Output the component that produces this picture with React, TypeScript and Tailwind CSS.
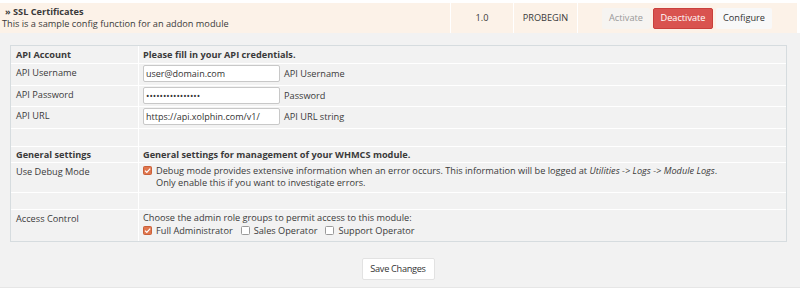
import React from 'react';

const Check = ({ on }: { on: boolean }) =>
  on ? (
    <svg className="inline-block w-[9px] h-[9px] mr-[4px] align-[-1px]" viewBox="0 0 9 9">
      <rect x="0.5" y="0.5" width="8" height="8" rx="1" fill="#e0764e" stroke="#c9603a" />
      <path d="M2 4.6 L3.8 6.4 L7.2 2.6" fill="none" stroke="#fff" strokeWidth="1.3" />
    </svg>
  ) : (
    <svg className="inline-block w-[9px] h-[9px] mr-[4px] align-[-1px]" viewBox="0 0 9 9">
      <rect x="0.5" y="0.5" width="8" height="8" rx="1" fill="#fff" stroke="#9a9a9a" />
    </svg>
  );

const Field = ({ value, hint }: { value: string; hint: string }) => (
  <div className="flex items-center">
    <div className="w-[137px] h-[17px] bg-white border border-[#c8c8c8] rounded-[2px] px-[2px] flex items-center text-[9px] text-[#333] overflow-hidden">
      {value}
    </div>
    <span className="ml-[4px]">{hint}</span>
  </div>
);

export default function App() {
  const rows: { label: string; h: string; bold?: boolean; content: React.ReactNode; top?: boolean }[] = [
    { label: 'API Account', h: 'h-[18px]', bold: true, content: <b>Please fill in your API credentials.</b> },
    { label: 'API Username', h: 'h-[22px]', top: true, content: <Field value="user@domain.com" hint="API Username" /> },
    { label: 'API Password', h: 'h-[21px]', top: true, content: <Field value="••••••••••••••••" hint="Password" /> },
    { label: 'API URL', h: 'h-[22px]', top: true, content: <Field value="https://api.xolphin.com/v1/" hint="API URL string" /> },
    { label: '', h: 'h-[18px]', content: null },
    { label: 'General settings', h: 'h-[16px]', bold: true, content: <b>General settings for management of your WHMCS module.</b> },
    {
      label: 'Use Debug Mode',
      h: 'h-[30px]',
      top: true,
      content: (
        <div className="leading-[12px] pt-[1px]">
          <div>
            <Check on />
            Debug mode provides extensive information when an error occurs. This information will be logged at{' '}
            <i>Utilities -&gt; Logs -&gt; Module Logs</i>.
          </div>
          <div className="pl-[13px]">Only enable this if you want to investigate errors.</div>
        </div>
      ),
    },
    { label: '', h: 'h-[17px]', content: null },
    {
      label: 'Access Control',
      h: 'h-[31px]',
      top: true,
      content: (
        <div className="leading-[13px]">
          <div>Choose the admin role groups to permit access to this module:</div>
          <div className="flex items-center">
            <span className="mr-[8px]"><Check on />Full Administrator</span>
            <span className="mr-[8px]"><Check on={false} />Sales Operator</span>
            <span><Check on={false} />Support Operator</span>
          </div>
        </div>
      ),
    },
  ];

  return (
    <div className="w-[800px] h-[291px] bg-white font-['Open_Sans',sans-serif] text-[9.2px] text-[#3a3a3a] overflow-hidden">
      <div className="pt-[3px] pr-[3px]">
        <div className="flex h-[30px] bg-[#fcf2e8]">
          <div className="flex-1 flex flex-col justify-center pl-[2px] leading-[12px]">
            <div className="font-bold pl-[3px]">» SSL Certificates</div>
            <div>This is a sample config function for an addon module</div>
          </div>
          <div className="w-[63px] border-l border-white flex items-center justify-center">1.0</div>
          <div className="w-[64px] border-l border-white flex items-center justify-center">PROBEGIN</div>
          <div className="w-[220px] border-l border-white flex items-center pl-[24px] gap-[3px]">
            <button className="w-[48px] h-[21px] rounded-[2px] bg-[#f6f4f1] text-[#999]">Activate</button>
            <button className="w-[60px] h-[21px] rounded-[2px] bg-[#d9534f] border border-[#c9403c] text-white">Deactivate</button>
            <button className="w-[56px] h-[21px] rounded-[2px] bg-[#f8f8f8] text-[#333]">Configure</button>
          </div>
        </div>
      </div>
      <div className="h-[255px] bg-[#f2f2f2] pt-[12px] pl-[10px] border-b border-[#e6e6e6]">
        <div className="w-[777px] border border-[#d6dcdf] bg-[#f2f2f2]">
          {rows.map((r, i) => (
            <div key={i} className={`flex ${r.h} ${i < rows.length - 1 ? 'border-b border-white' : ''}`}>
              <div
                className={`w-[128px] border-r border-white pl-[5px] flex ${r.top ? 'items-start pt-[2px]' : 'items-center'} ${r.bold ? 'font-bold' : ''}`}
              >
                {r.label}
              </div>
              <div className={`flex-1 pl-[4px] flex ${r.top ? 'items-start pt-[1px]' : 'items-center'}`}>{r.content}</div>
            </div>
          ))}
        </div>
        <div className="flex justify-center mt-[16px] pr-[14px]">
          <button className="w-[73px] h-[22px] bg-white border border-[#e2e2e2] rounded-[2px] text-[#333] tracking-[-0.3px]">
            Save Changes
          </button>
        </div>
      </div>
    </div>
  );
}
